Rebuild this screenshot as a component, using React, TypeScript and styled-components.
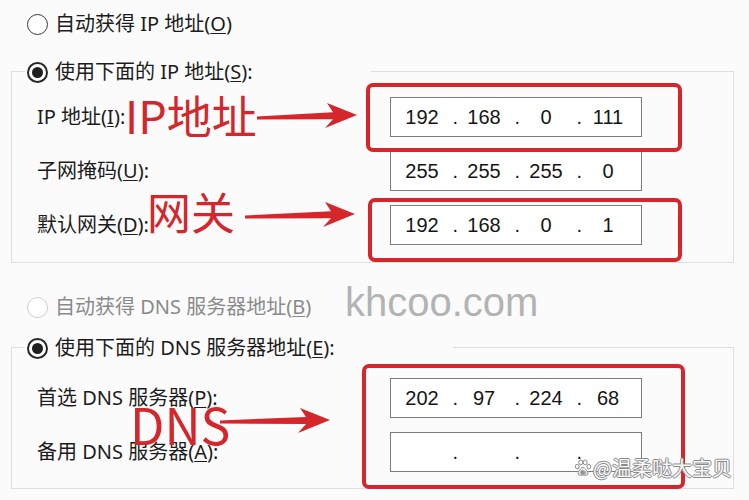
import React from 'react';
import styled, { createGlobalStyle } from 'styled-components';

const RED = '#d4262b';
const BG = '#fbfbfb';

const GlobalStyle = createGlobalStyle`
  html, body {
    margin: 0;
    padding: 0;
    background: ${BG};
  }
  body {
    width: 749px;
    height: 500px;
    overflow: hidden;
    font-family: "Noto Sans", "Noto Sans CJK SC", sans-serif;
    color: #1c1c1c;
  }
`;

const Page = styled.div`
  position: relative;
  width: 749px;
  height: 500px;
  padding-top: 11px;
  box-sizing: border-box;
`;

const RadioRow = styled.div<{ $disabled?: boolean }>`
  display: flex;
  align-items: center;
  gap: 7px;
  height: 26px;
  font-size: 20px;
  line-height: 26px;
  white-space: nowrap;
  color: ${(p) => (p.$disabled ? '#8a8a8a' : '#1c1c1c')};
`;

const TopRow = styled(RadioRow)<{ $mt: number }>`
  margin: ${(p) => p.$mt}px 0 0 27px;
`;

const Circle = styled.span<{ $checked?: boolean; $disabled?: boolean }>`
  flex: none;
  width: 21px;
  height: 21px;
  box-sizing: border-box;
  border-radius: 50%;
  border: ${(p) => (p.$checked ? '2px solid #262626' : p.$disabled ? '1.5px solid #cdcdcd' : '1.5px solid #3a3a3a')};
  background: #fff;
  display: flex;
  align-items: center;
  justify-content: center;

  &::after {
    content: '';
    display: ${(p) => (p.$checked ? 'block' : 'none')};
    width: 11px;
    height: 11px;
    border-radius: 50%;
    background: #1f1f1f;
  }
`;

const Key = styled.u`
  text-underline-offset: 2px;
  text-decoration-thickness: 1px;
`;

const Group = styled.div<{ $mt: number; $pb: number }>`
  margin: ${(p) => p.$mt}px 15px 0 11px;
  border: 1px solid #dedede;
  padding: 0 0 ${(p) => p.$pb}px 25px;
`;

const Legend = styled(RadioRow)`
  width: fit-content;
  margin: -13px 0 0 -12px;
  padding: 0 118px 0 2px;
  background: ${BG};
`;

const Rows = styled.div<{ $pt: number }>`
  display: grid;
  row-gap: 14px;
  margin-top: ${(p) => p.$pt}px;
`;

const Row = styled.div`
  display: grid;
  grid-template-columns: 353px 252px;
  align-items: center;
  height: 40px;
`;

const Label = styled.span`
  font-size: 20px;
  line-height: 26px;
  white-space: nowrap;
`;

const IpBox = styled.div`
  height: 40px;
  box-sizing: border-box;
  border: 1px solid #7d7d7d;
  background: #fff;
  display: flex;
  align-items: center;
  padding-left: 5px;
  font-family: "Liberation Sans", Arial, sans-serif;
  font-size: 20px;
  color: #151515;
`;

const Octet = styled.span`
  width: 52px;
  text-align: center;
`;

const Dot = styled.span`
  width: 10px;
  text-align: right;
`;

/* annotations drawn over the dialog */

const RedBox = styled.div<{ $x: number; $y: number; $w: number; $h: number }>`
  position: absolute;
  left: ${(p) => p.$x}px;
  top: ${(p) => p.$y}px;
  width: ${(p) => p.$w}px;
  height: ${(p) => p.$h}px;
  box-sizing: border-box;
  border: 4px solid ${RED};
  border-radius: 7px;
`;

const RedText = styled.span<{ $x: number; $y: number; $size: number }>`
  position: absolute;
  left: ${(p) => p.$x}px;
  top: ${(p) => p.$y}px;
  font-family: "Noto Sans CJK SC", "Noto Sans", sans-serif;
  font-size: ${(p) => p.$size}px;
  line-height: 1;
  color: ${RED};
  white-space: nowrap;
`;

const ArrowSvg = styled.svg<{ $x: number; $y: number }>`
  position: absolute;
  left: ${(p) => p.$x}px;
  top: ${(p) => p.$y}px;
  overflow: visible;
`;

const Site = styled.span`
  position: absolute;
  left: 345px;
  top: 282px;
  font-family: "Liberation Sans", Arial, sans-serif;
  font-size: 40px;
  line-height: 40px;
  color: #b3b3b3;
`;

const Credit = styled.div`
  position: absolute;
  left: 574px;
  top: 456px;
  display: flex;
  align-items: center;
  gap: 1px;
  font-family: "Noto Sans CJK SC", sans-serif;
  font-size: 20px;
  line-height: 24px;
  color: #f7f7f7;
  text-shadow: 1px 0 0 #8a8a8a, -1px 0 0 #8a8a8a, 0 1px 0 #8a8a8a, 0 -1px 0 #8a8a8a;
`;

type ArrowProps = { x: number; y: number; len: number; tilt: number };

const Arrow = ({ x, y, len, tilt }: ArrowProps) => {
  const c = 16;
  const base = len - 24;
  const mid = c + (tilt * base) / len;
  const tip = c + tilt;
  const pts = [
    `0,${c - 1.5}`,
    `${base},${mid - 3.5}`,
    `${base - 6},${tip - 12}`,
    `${len},${tip}`,
    `${base - 8},${tip + 13}`,
    `${base},${mid + 3.5}`,
    `0,${c + 1.5}`,
  ].join(' ');
  return (
    <ArrowSvg $x={x} $y={y - c} width={len} height={32} viewBox={`0 0 ${len} 32`}>
      <polygon points={pts} fill={RED} />
    </ArrowSvg>
  );
};

const Paw = () => (
  <svg width="18" height="18" viewBox="0 0 18 18">
    <g fill="#fff" stroke="#8a8a8a" strokeWidth="1">
      <ellipse cx="3.2" cy="7.6" rx="1.9" ry="2.3" />
      <ellipse cx="6.8" cy="3.4" rx="2" ry="2.4" />
      <ellipse cx="11.2" cy="3.4" rx="2" ry="2.4" />
      <ellipse cx="14.8" cy="7.6" rx="1.9" ry="2.3" />
      <path d="M9 8.6c-2 0-3 2.2-4.3 3.8-1.4 1.7-.6 4 1.6 4 1.2 0 1.8-.4 2.7-.4s1.5.4 2.7.4c2.2 0 3-2.3 1.6-4C12 10.8 11 8.6 9 8.6z" />
    </g>
    <text x="9" y="15" textAnchor="middle" fontSize="4.5" fill="#8a8a8a" fontFamily="Liberation Sans, sans-serif">
      du
    </text>
  </svg>
);

const Address = ({ parts }: { parts: string[] }) => (
  <IpBox>
    {parts.map((part, i) => (
      <React.Fragment key={i}>
        <Octet>{part}</Octet>
        {i < 3 && <Dot>.</Dot>}
      </React.Fragment>
    ))}
  </IpBox>
);

export default function App() {
  return (
    <>
      <GlobalStyle />
      <Page>
        <TopRow $mt={0}>
          <Circle />
          <span>
            自动获得 IP 地址(<Key>O</Key>)
          </span>
        </TopRow>

        <Group $mt={34} $pb={17}>
          <Legend>
            <Circle $checked />
            <span>
              使用下面的 IP 地址(<Key>S</Key>):
            </span>
          </Legend>
          <Rows $pt={12}>
            <Row>
              <Label>
                IP 地址(<Key>I</Key>):
              </Label>
              <Address parts={['192', '168', '0', '111']} />
            </Row>
            <Row>
              <Label>
                子网掩码(<Key>U</Key>):
              </Label>
              <Address parts={['255', '255', '255', '0']} />
            </Row>
            <Row>
              <Label>
                默认网关(<Key>D</Key>):
              </Label>
              <Address parts={['192', '168', '0', '1']} />
            </Row>
          </Rows>
        </Group>

        <TopRow $mt={31} $disabled>
          <Circle $disabled />
          <span>
            自动获得 DNS 服务器地址(<Key>B</Key>)
          </span>
        </TopRow>

        <Group $mt={27} $pb={16}>
          <Legend>
            <Circle $checked />
            <span>
              使用下面的 DNS 服务器地址(<Key>E</Key>):
            </span>
          </Legend>
          <Rows $pt={17}>
            <Row>
              <Label>
                首选 DNS 服务器(<Key>P</Key>):
              </Label>
              <Address parts={['202', '97', '224', '68']} />
            </Row>
            <Row>
              <Label>
                备用 DNS 服务器(<Key>A</Key>):
              </Label>
              <Address parts={['', '', '', '']} />
            </Row>
          </Rows>
        </Group>

        <RedBox $x={366} $y={83} $w={316} $h={69} />
        <RedBox $x={368} $y={198} $w={314} $h={64} />
        <RedBox $x={362} $y={364} $w={323} $h={125} />

        <RedText $x={125} $y={92} $size={45}>IP地址</RedText>
        <RedText $x={147} $y={189} $size={44}>网关</RedText>
        <RedText $x={130} $y={398} $size={50}>DNS</RedText>

        <Arrow x={257} y={118} len={100} tilt={-3} />
        <Arrow x={245} y={217} len={110} tilt={-3} />
        <Arrow x={220} y={422} len={110} tilt={-2} />

        <Site>khcoo.com</Site>
        <Credit>
          <Paw />
          <span>@温柔哒大宝贝</span>
        </Credit>
      </Page>
    </>
  );
}
